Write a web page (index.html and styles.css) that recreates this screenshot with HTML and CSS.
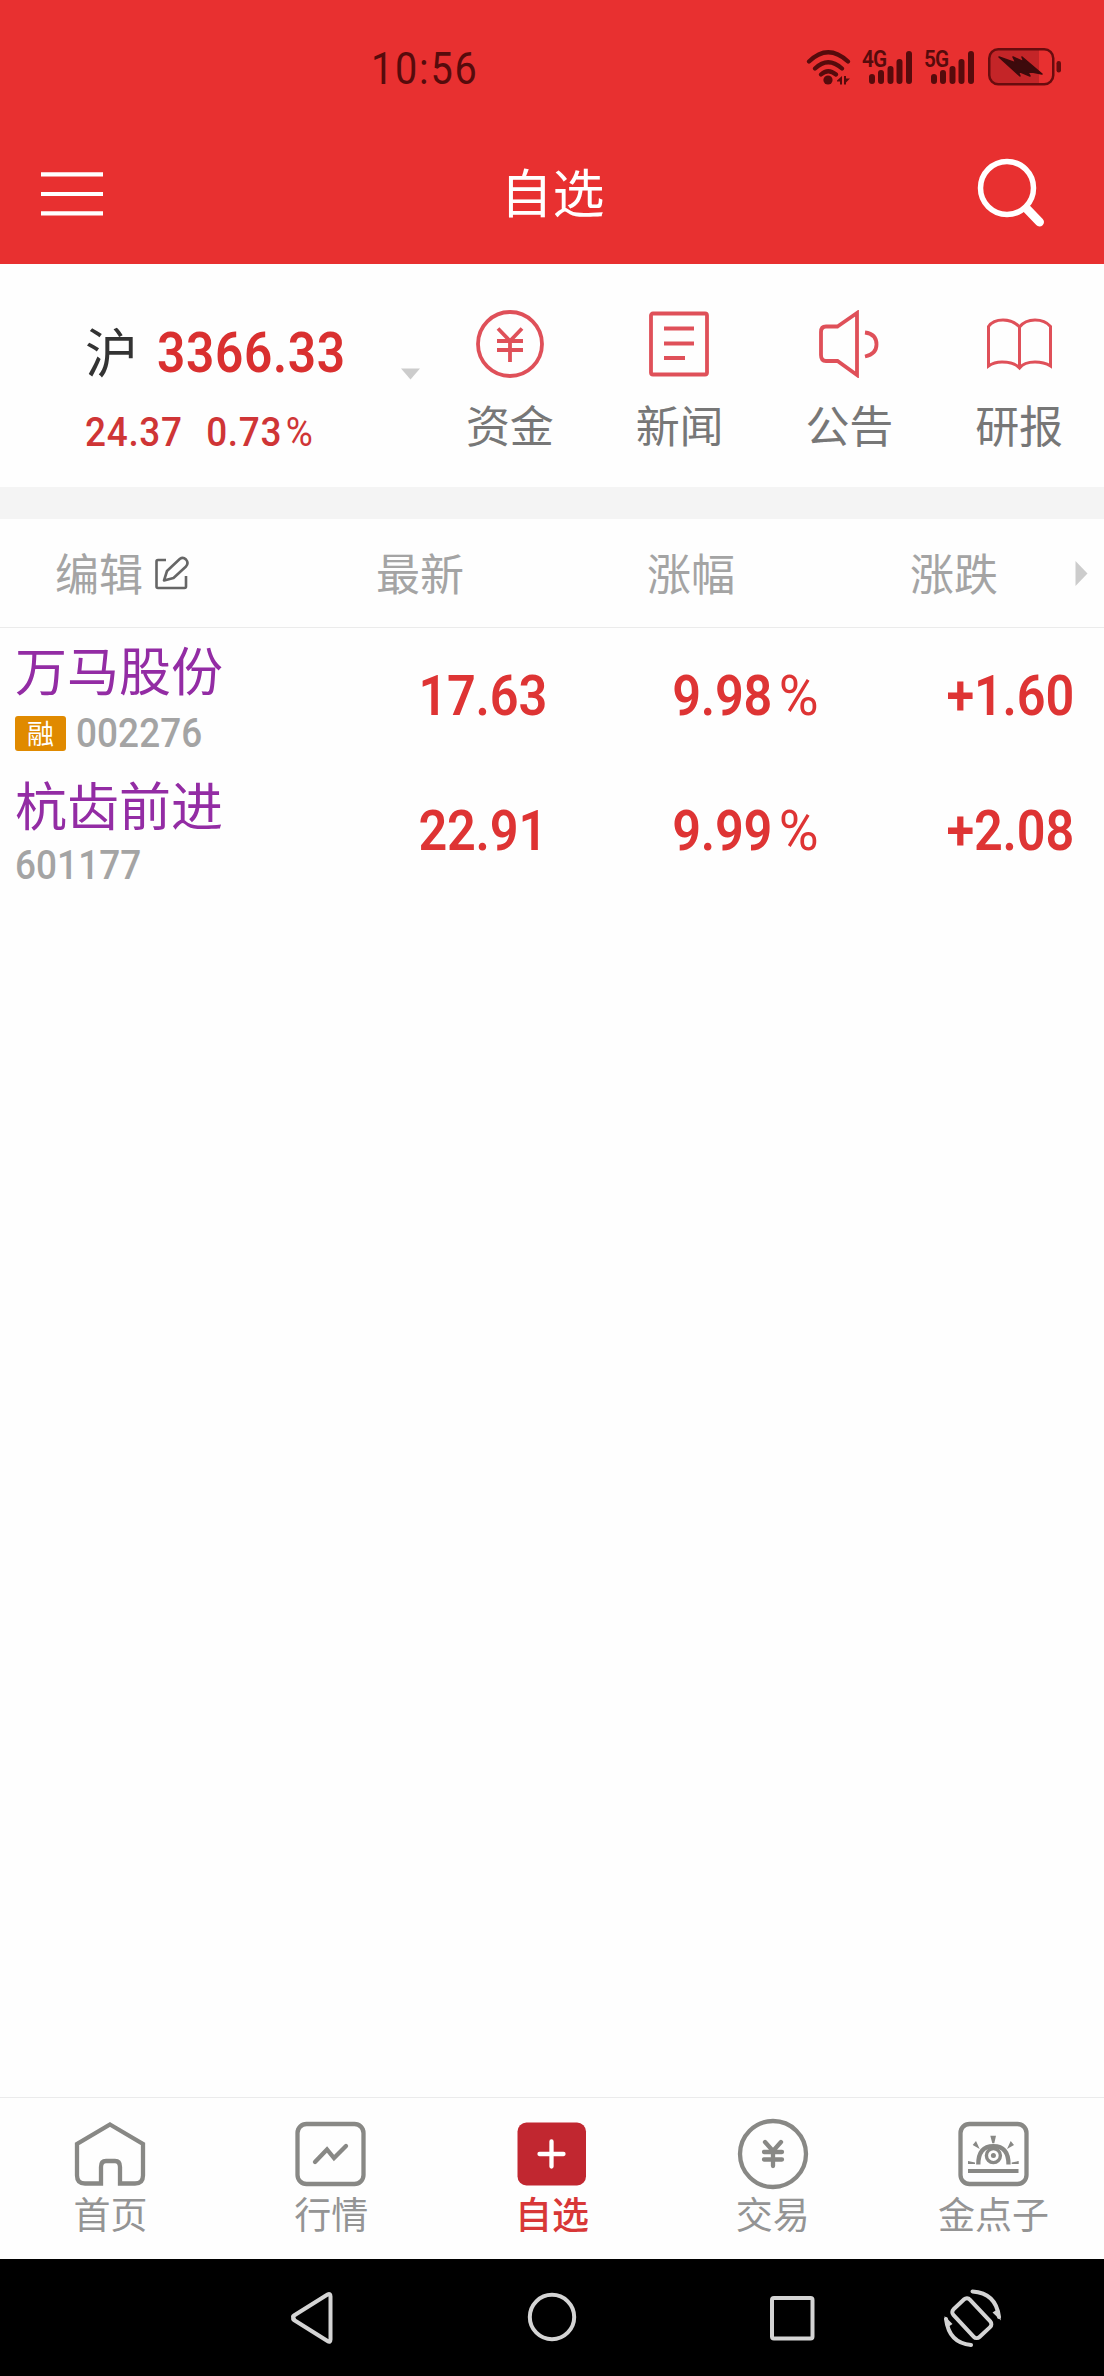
FILE: index.html
```html
<!DOCTYPE html>
<html lang="zh-CN">
<head>
<meta charset="utf-8">
<title>自选</title>
<link rel="stylesheet" href="styles.css">
</head>
<body>
<div class="app">
  <header class="top">
    <div class="status">
      <span class="clock">10:56</span>
      <div class="status-icons">
        <svg class="wifi" width="46" height="36" viewBox="0 0 46 36" fill="none" stroke="#560b0c" stroke-width="4.2" stroke-linecap="round">
          <path d="M3 11.500Q22 -7 42 11.500M9 18.500Q22 6 36 18.500M15 24.500Q22 18 30 24.500"/>
          <circle cx="22" cy="30" r="4.600" fill="#560b0c" stroke="none"/>
          <path d="M31 30.500L36 26V34.500H34V31.500H31ZM38 26H40V28.500H44L40 32.500V34.500H38Z" fill="#560b0c" stroke="none"/>
        </svg>
        <div class="signal">
          <span class="net">4G</span>
          <svg width="44" height="36" viewBox="0 0 44 36" stroke="#560b0c" stroke-width="6" stroke-linecap="round"><path d="M4 27V31M13 23V31M22.500 19V31M31.500 12V31M41 4V31"/></svg>
        </div>
        <div class="signal">
          <span class="net">5G</span>
          <svg width="44" height="36" viewBox="0 0 44 36" stroke="#560b0c" stroke-width="6" stroke-linecap="round"><path d="M4 27V31M13 23V31M22.500 19V31M31.500 12V31M41 4V31"/></svg>
        </div>
        <svg class="battery" width="74" height="38" viewBox="0 0 74 38">
          <path d="M10 2H51V36H10Q2 36 2 28V10Q2 2 10 2Z" fill="#c42528"/>
          <rect x="1.250" y="1.250" width="64" height="35" rx="9" fill="none" stroke="#690c0e" stroke-width="2.500"/>
          <path d="M11 9L28 15L25 9L36 14L34 9L54 26L39 23L42 28L30 23L32 28Z" fill="#3d0a0c" stroke="#3d0a0c" stroke-width="1.500" stroke-linejoin="round"/>
          <rect x="68.500" y="13" width="4.500" height="11.500" rx="2.200" fill="#690c0e"/>
        </svg>
      </div>
    </div>
    <div class="nav">
      <svg class="menu" width="62" height="44" viewBox="0 0 62 44" fill="#fff"><path d="M0 .2H62V4.400H0ZM0 20H62V24H0ZM0 39.300H62V43.500H0Z"/></svg>
      <h1 class="title">自选</h1>
      <svg class="search" width="68" height="70" viewBox="0 0 68 70" fill="none" stroke="#fff" stroke-linecap="round">
        <circle cx="30" cy="30" r="26.500" stroke-width="5.500"/><path d="M50 51L62.500 64" stroke-width="9"/>
      </svg>
    </div>
  </header>

  <section class="summary">
    <div class="index">
      <div class="index-main"><span class="market">沪</span><span class="points">3366.33</span></div>
      <div class="index-sub"><span>24.37</span><span>0.73<i class="pct">%</i></span></div>
    </div>
    <svg class="drop" width="19" height="12" viewBox="0 0 19 12"><path d="M0 .5H19L9.500 11.500Z" fill="#ccc"/></svg>
    <nav class="quick">
      <a class="quick-item">
        <svg width="68" height="68" viewBox="0 0 68 68"><circle cx="34" cy="34" r="32"/><path d="M22 18.500L34 31L46 18.500M34 31V52M21 31H47M21 40H47"/></svg>
        <span>资金</span>
      </a>
      <a class="quick-item">
        <svg width="68" height="68" viewBox="0 0 68 68"><rect x="5" y="3.500" width="56" height="61" rx="2"/><path d="M18 18.500H48M18 33.500H48M18 48H39"/></svg>
        <span>新闻</span>
      </a>
      <a class="quick-item">
        <svg width="68" height="68" viewBox="0 0 68 68"><path d="M22.500 16.500L42 3V65L22.500 51H11Q6 51 6 45V22Q6 16.500 11 16.500Z"/><path d="M50 22.500Q61.500 24 61.500 34.500Q61.500 44 50 46.500"/></svg>
        <span>公告</span>
      </a>
      <a class="quick-item">
        <svg class="thin" width="68" height="68" viewBox="0 0 68 68"><path d="M34.500 17Q28 10 18 10Q8 10 3.500 16.500V56Q9 52 17 52Q29 52 34.500 58Q39 52 50 52Q59 52 65.500 56V16.500Q60 10 50 10Q40 10 34.500 17ZM34.500 17V58"/></svg>
        <span>研报</span>
      </a>
    </nav>
  </section>

  <section class="list">
    <div class="list-head">
      <a class="edit">编辑
        <svg width="34" height="34" viewBox="0 0 34 34" fill="none" stroke="#666" stroke-width="2.600" stroke-linejoin="round"><path d="M11 4H3Q1.500 4 1.500 5.500V30.500Q1.500 32 3 32H29.500Q31 32 31 30.500V20"/><path d="M9 24.500L12 15L25 2.800Q28 .5 31 3.500Q34 7 31 10.500L18.500 22Z"/></svg>
      </a>
      <span>最新</span>
      <span>涨幅</span>
      <span>涨跌</span>
      <svg class="more" width="13" height="25" viewBox="0 0 13 25"><path d="M.5 0L12.500 12.500L.5 25Z" fill="#ccc"/></svg>
    </div>
    <div class="row">
      <div class="stock">
        <div class="name">万马股份</div>
        <div class="meta"><span class="badge">融</span><span class="code">002276</span></div>
      </div>
      <span class="num">17.63</span>
      <span class="num">9.98<i class="pct">%</i></span>
      <span class="num">+1.60</span>
    </div>
    <div class="row">
      <div class="stock">
        <div class="name">杭齿前进</div>
        <div class="meta plain"><span class="code">601177</span></div>
      </div>
      <span class="num">22.91</span>
      <span class="num">9.99<i class="pct">%</i></span>
      <span class="num">+2.08</span>
    </div>
  </section>

  <nav class="tabs">
    <a class="tab">
      <svg width="72" height="72" viewBox="0 0 72 72"><path d="M36 6.500L69 26V57.500Q69 65.500 61 65.500H46V49Q46 43 41 43H32Q27 43 27 49V65.500H11Q3 65.500 3 57.500V26Z"/></svg>
      <span>首页</span>
    </a>
    <a class="tab">
      <svg width="72" height="72" viewBox="0 0 72 72"><rect x="2.500" y="6" width="66" height="60" rx="9"/><path d="M20 44L32 31.500L39 40L51 28" stroke-linecap="round"/></svg>
      <span>行情</span>
    </a>
    <a class="tab active">
      <svg width="72" height="72" viewBox="0 0 72 72"><rect x="1.500" y="4.500" width="68.500" height="63" rx="9" fill="#c12730" stroke="none"/><path d="M23.500 36H47.500M35.500 23.500V48.500" stroke="#fff" stroke-linecap="round"/></svg>
      <span>自选</span>
    </a>
    <a class="tab">
      <svg width="72" height="72" viewBox="0 0 72 72"><circle cx="36" cy="36" r="33"/><path d="M28 24L36 33L44 24M36 33V48M27 34H45M27 41.500H45" stroke-linecap="round"/></svg>
      <span>交易</span>
    </a>
    <a class="tab">
      <svg width="72" height="72" viewBox="0 0 72 72"><rect x="2.500" y="6" width="66" height="60" rx="9"/><path d="M10 53H60.500" stroke-width="4"/><path d="M20.300 46.500Q20.300 28.200 35.400 28.200Q50.500 28.200 50.500 46.500"/><circle cx="35.400" cy="37.600" r="7" stroke-width="3.400"/><circle cx="35.400" cy="37.600" r="2.500" fill="#888885" stroke="none"/><path d="M32.300 17.700H38L36.300 25.300H34.300ZM14.700 27L18 23L21.700 31ZM56 27L52.700 23L49 31ZM10 43L17 44.500V46H10ZM60.700 43L53.700 44.500V46H60.700Z" fill="#888885" stroke="none"/></svg>
      <span>金点子</span>
    </a>
  </nav>

  <div class="system">
    <svg width="44" height="52" viewBox="0 0 44 52"><path d="M3.500 26Q2.500 24.500 4 23.500L37.500 2.500Q40.500 1 40.500 4.500V47.500Q40.500 51 37.500 49L4 28Q2.500 27 3.500 26Z"/></svg>
    <svg width="52" height="52" viewBox="0 0 52 52"><circle cx="26" cy="25" r="22.200"/></svg>
    <svg width="48" height="52" viewBox="0 0 48 52"><rect x="2" y="6" width="40.500" height="40.500" rx="2"/></svg>
    <svg width="60" height="60" viewBox="0 0 60 60"><rect x="9" y="19" width="38" height="22.500" rx="4" transform="rotate(47 28 30)"/><path d="M28.500 3.500Q52 5 55 29M27 57Q5 55 2 31"/><path d="M48.500 24.500L54 21L57 32.500ZM8.500 36L2.500 40L.5 28Z" fill="#d4d4d4" stroke="none"/></svg>
  </div>
</div>
</body>
</html>
```
FILE: styles.css
```css
* { box-sizing: border-box; }
body {
  margin: 0;
  font-family: "Noto Sans CJK SC", sans-serif;
  background: #fff;
}
svg { display: block; flex: none; }
.app {
  width: 1104px;
  height: 2376px;
  display: flex;
  flex-direction: column;
  background: #fefefe;
}

.clock, .net, .points, .index-sub, .code, .num {
  font-family: Roboto, sans-serif;
  transform: scaleX(.9);
  transform-origin: left;
}

.top { height: 264px; background: #e83030; }
.status {
  height: 130px;
  padding: 48px 42px 0 371px;
  display: flex;
  justify-content: space-between;
  align-items: flex-start;
}
.clock {
  font-size: 44px;
  line-height: 42px;
  letter-spacing: 2px;
  color: #560b0c;
}
.status-icons { display: flex; align-items: flex-start; }
.wifi { margin: 2px 16px 0 0; }
.signal {
  position: relative;
  width: 44px;
  margin: 1px 18px 0 0;
}
.signal svg { margin-top: 1px; }
.net {
  position: absolute;
  left: -6px;
  top: 1px;
  font-size: 23px;
  line-height: 20px;
  font-weight: 600;
  letter-spacing: -1px;
  color: #560b0c;
}
.battery { margin-left: -4px; }

.nav {
  height: 134px;
  padding: 0 59px 0 41px;
  display: grid;
  grid-template-columns: 68px 1fr 68px;
  align-items: start;
}
.menu { margin-top: 42px; }
.title {
  margin: 31px 0 0 19px;
  text-align: center;
  font-size: 52px;
  line-height: 60px;
  font-weight: 400;
  color: #fff;
}
.search { margin-top: 28px; }

.summary {
  height: 223px;
  display: flex;
  align-items: flex-start;
}
.index { width: 401px; padding: 59px 0 0 85px; }
.index-main { display: flex; height: 60px; line-height: 61px; }
.market { width: 72px; font-size: 53px; line-height: 54px; color: #333; }
.points {
  font-size: 55px;
  font-weight: 600;
  letter-spacing: .8px;
  color: #d93030;
}
.index-sub {
  display: flex;
  gap: 26px;
  margin-top: 24px;
  font-size: 41px;
  line-height: 50px;
  font-weight: 500;
  letter-spacing: .8px;
  color: #cf3536;
}
.pct { margin-left: 4px; font-style: normal; font-weight: 400; }
.drop { margin-top: 104px; }
.quick {
  flex: 1;
  display: grid;
  grid-template-columns: repeat(4, 1fr);
  padding: 46px 0 0 5px;
}
.quick-item {
  display: flex;
  flex-direction: column;
  align-items: center;
  gap: 24px;
  font-size: 44px;
  line-height: 44px;
  color: #777;
}
.quick-item svg { fill: none; stroke: #df5059; stroke-width: 3.8; }
.quick-item svg.thin { stroke-width: 3; }

.list { flex: 1; border-top: 32px solid #f4f4f4; }
.list-head {
  height: 109px;
  display: grid;
  grid-template-columns: 376px 271px 263px 165px 1fr;
  align-items: center;
  border-bottom: 1px solid #ebebeb;
  font-size: 44px;
  line-height: 44px;
  color: #a4a4a4;
  padding-bottom: 3px;
}
.edit { display: flex; gap: 12px; padding-left: 55px; }
.edit svg { margin-top: 6px; }
.more { margin-top: 3px; }
.row {
  height: 135px;
  display: grid;
  grid-template-columns: 300px 247px 270px 257px;
  align-items: center;
}
.stock { align-self: start; padding: 13px 0 0 15px; }
.name { font-size: 52px; line-height: 56px; color: #932ca4; }
.meta { display: flex; align-items: center; gap: 10px; height: 36px; margin-top: 18px; }
.meta.plain { margin-top: 15px; }
.badge {
  width: 51px;
  height: 35px;
  border-radius: 3px;
  background: #e08a00;
  color: #fff;
  font-size: 27px;
  line-height: 33px;
  text-align: center;
}
.code { font-size: 41px; line-height: 36px; letter-spacing: .1px; font-weight: 500; color: #a4a4a4; }
.num {
  transform-origin: right;
  text-align: right;
  font-size: 56px;
  line-height: 60px;
  font-weight: 600;
  letter-spacing: -.2px;
  color: #de3434;
}
.num .pct {
  display: inline-block;
  margin-left: 9px;
  transform: scaleX(1.08);
}

.tabs {
  height: 162px;
  border-top: 1px solid #ebebeb;
  display: grid;
  grid-template-columns: repeat(5, 1fr);
}
.tab {
  display: flex;
  flex-direction: column;
  align-items: center;
  gap: 5px;
  padding-top: 20px;
  font-size: 37px;
  line-height: 37px;
  color: #949494;
}
.tab svg { fill: none; stroke: #888885; stroke-width: 4.3; }
.tab.active { color: #d83737; font-weight: 500; }

.system {
  height: 117px;
  background: #000;
  display: flex;
  align-items: center;
  padding: 0 102px 0 290px;
  gap: 192px;
}
.system svg { fill: none; stroke: #d4d4d4; stroke-width: 4; stroke-linecap: round; }
.system svg:last-child { margin-left: -66px; }
```
